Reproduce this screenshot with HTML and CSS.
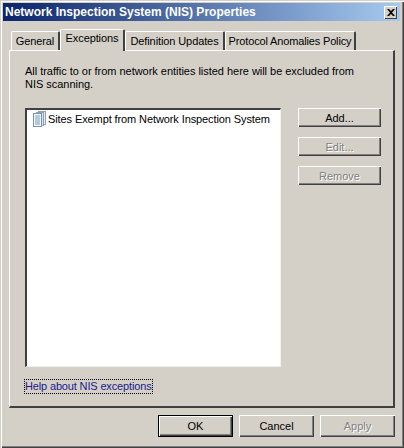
FILE: index.html
```html
<!DOCTYPE html>
<html lang="en">
<head>
    <meta charset="UTF-8">
    <title>Network Inspection System (NIS) Properties</title>
    <link rel="stylesheet" href="styles.css">
</head>
<body>
    <div class="dialog">
        <div class="titlebar">
            <span class="title">Network Inspection System (NIS) Properties</span>
            <button class="close">
                <svg width="8" height="7" viewBox="0 0 8 7">
                    <path d="M0 0h2l2 2 2-2h2L5 3.500 8 7H6L4 5 2 7H0l3-3.500z" fill="#000"/>
                </svg>
            </button>
        </div>
        <div class="tabs">
            <a class="tab tab-general">General</a>
            <a class="tab tab-active">Exceptions</a>
            <a class="tab tab-definition">Definition Updates</a>
            <a class="tab tab-protocol">Protocol Anomalies Policy</a>
        </div>
        <div class="panel">
            <p class="intro">All traffic to or from network entities listed here will be excluded from NIS scanning.</p>
            <div class="content">
                <div class="list">
                    <div class="list-item">
                        <svg class="site-icon" width="13" height="16" viewBox="0 0 13 16">
                            <rect x="5.500" y="0.500" width="7" height="13" fill="#e4edf6" stroke="#8ea3b8"/>
                            <rect x="3.500" y="1.500" width="7" height="13" fill="#d3e0ee" stroke="#8ea3b8"/>
                            <rect x="0.500" y="2.500" width="8" height="13" fill="#f4f7fb" stroke="#7d94ab"/>
                            <path d="M2 5h5M2 7h5M2 9h5M2 11h5M2 13h5" stroke="#6f9fd0"/>
                        </svg>
                        <span>Sites Exempt from Network Inspection System</span>
                    </div>
                </div>
                <div class="side-buttons">
                    <button class="btn">Add...</button>
                    <button class="btn" disabled>Edit...</button>
                    <button class="btn" disabled>Remove</button>
                </div>
            </div>
            <a class="help-link" href="#">Help about NIS exceptions</a>
        </div>
        <div class="footer">
            <button class="btn btn-default">OK</button>
            <button class="btn btn-footer">Cancel</button>
            <button class="btn btn-footer" disabled>Apply</button>
        </div>
    </div>
</body>
</html>
```

FILE: styles.css
```css
* {
    box-sizing: border-box;
}
body {
    margin: 0;
    font-family: "Liberation Sans", Arial, sans-serif;
    font-size: 11px;
    color: #000;
    background: #d4d0c8;
}
.dialog {
    width: 404px;
    height: 448px;
    padding: 3px 4px 0 3px;
    background: #d4d0c8;
    box-shadow: inset 1px 1px 0 #d4d0c8, inset 2px 2px 0 #fff, inset -1px -1px 0 #404040, inset -2px -2px 0 #808080;
}
.titlebar {
    height: 18px;
    display: flex;
    align-items: center;
    justify-content: space-between;
    padding: 0 3px 0 2px;
    background: linear-gradient(to right, #0a246a, #a6caf0);
}
.title {
    color: #fff;
    font-weight: bold;
    font-size: 12px;
}
.close {
    width: 13px;
    height: 13px;
    padding: 0;
    border: none;
    display: flex;
    align-items: center;
    justify-content: center;
    background: #d4d0c8;
    box-shadow: inset 1px 1px 0 #fff, inset -1px -1px 0 #404040;
}
.tabs {
    display: flex;
    align-items: flex-end;
    height: 21px;
    margin-top: 8px;
    padding-left: 8px;
}
.tab {
    height: 19px;
    padding-top: 3px;
    text-align: center;
    white-space: nowrap;
    letter-spacing: -0.1px;
    border-top: 1px solid #fff;
    border-left: 1px solid #fff;
    border-right: 2px solid #404040;
    border-radius: 2px 2px 0 0;
}
.tab-general {
    width: 49px;
}
.tab-active {
    position: relative;
    width: 65px;
    height: 22px;
    margin-bottom: -1px;
    padding-top: 2px;
    background: #d4d0c8;
}
.tab-definition {
    width: 100px;
}
.tab-protocol {
    width: 131px;
    letter-spacing: -0.15px;
}
.panel {
    width: 386px;
    height: 358px;
    margin-left: 6px;
    padding: 14px 0 0 15px;
    border-top: 1px solid #fff;
    border-left: 1px solid #fff;
    border-right: 2px solid #404040;
    border-bottom: 2px solid #404040;
}
.intro {
    margin: 0 0 17px;
    width: 340px;
    line-height: 13px;
    height: 26px;
    letter-spacing: -0.03px;
}
.content {
    display: flex;
    gap: 17px;
}
.list {
    flex: none;
    width: 256px;
    height: 259px;
    padding: 1px 0 0 6px;
    background: #fff;
    border-top: 2px solid #404040;
    border-left: 2px solid #404040;
    border-right: 1px solid #f0f0f0;
    border-bottom: 1px solid #f0f0f0;
}
.list-item {
    display: flex;
    align-items: center;
    gap: 2px;
    height: 16px;
    white-space: nowrap;
    letter-spacing: -0.1px;
}
.side-buttons {
    display: flex;
    flex-direction: column;
    gap: 10px;
    width: 83px;
}
.btn {
    height: 19px;
    padding: 0;
    font: inherit;
    color: #000;
    background: #d4d0c8;
    border: none;
    box-shadow: inset 1px 1px 0 #fff, inset -1px -1px 0 #404040, inset -2px -2px 0 #808080;
}
.btn:disabled {
    color: #808080;
    text-shadow: 1px 1px 0 #fff;
}
.help-link {
    display: inline-block;
    margin-top: 13px;
    height: 13px;
    line-height: 12px;
    color: #1a1a8c;
    letter-spacing: -0.15px;
    outline: 1px dotted #000;
    text-decoration: none;
}
.footer {
    display: flex;
    justify-content: flex-end;
    gap: 6px;
    padding: 7px 5px 0 0;
}
.btn-footer {
    width: 75px;
    height: 22px;
}
.btn-default {
    width: 75px;
    height: 22px;
    border: 1px solid #000;
}
```
